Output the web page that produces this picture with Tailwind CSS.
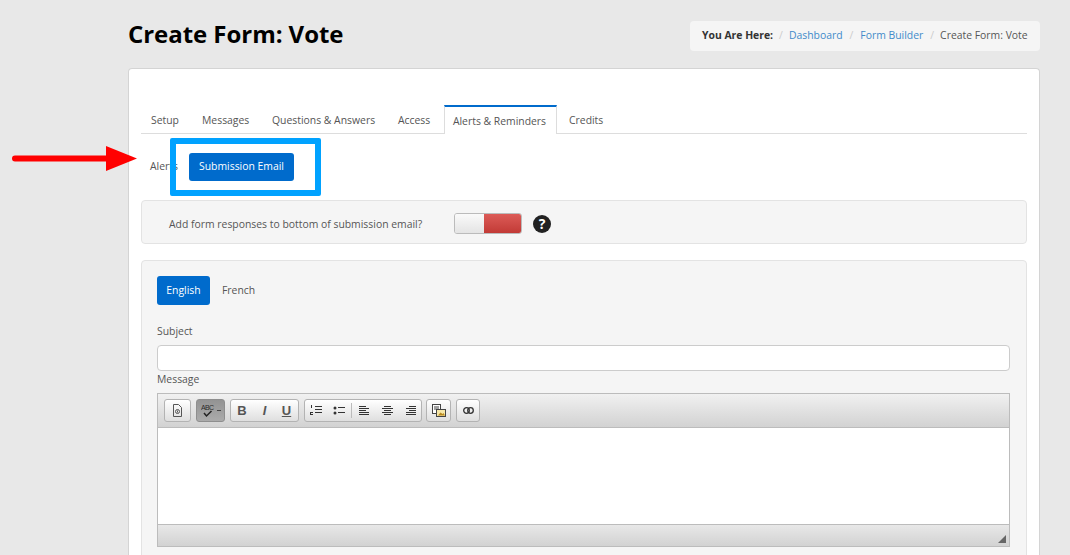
<!DOCTYPE html>
<html lang="en">
<head>
<meta charset="UTF-8">
<title>Create Form: Vote</title>
<script src="https://cdn.jsdelivr.net/npm/@tailwindcss/browser@4"></script>
</head>
<body class="relative h-[555px] overflow-hidden bg-[#e8e8e8] font-['Open_Sans',sans-serif] text-[10.4px] text-[#555]">

<!-- page header -->
<header class="ml-[128px] w-[912px] h-[68px] flex items-start justify-between">
  <h1 class="mt-[17px] text-[24px] leading-[34px] font-bold text-black tracking-[-0.05px]">Create Form: Vote</h1>
  <nav class="mt-[21px] h-[30px] w-[350px] pl-[12px] flex items-center whitespace-nowrap bg-[#f5f5f5] rounded-[4px]">
    <b class="text-[#333]">You Are Here:</b>
    <span class="mx-[6px] text-[#ccc]">/</span>
    <a class="text-[#428bca]">Dashboard</a>
    <span class="mx-[7px] text-[#ccc]">/</span>
    <a class="text-[#428bca]">Form Builder</a>
    <span class="ml-[7px] mr-[6px] text-[#ccc]">/</span>
    <span>Create Form: Vote</span>
  </nav>
</header>

<!-- main card -->
<main class="ml-[128px] w-[912px] h-[487px] overflow-hidden bg-white border border-b-0 border-[#d4d4d4] rounded-t-[4px] pt-[36px] px-[12px]">
  <div class="flex h-[29px] border-b border-[#ddd] whitespace-nowrap">
    <a class="w-[51px] pl-[10px] leading-[31px]">Setup</a>
    <a class="w-[70px] pl-[10px] leading-[31px]">Messages</a>
    <a class="w-[126px] pl-[10px] leading-[31px]">Questions &amp; Answers</a>
    <a class="w-[56px] pl-[10px] leading-[31px]">Access</a>
    <a class="w-[113px] h-[29px] pr-[2px] text-center leading-[29px] bg-white border-x border-[#ddd] border-t-2 border-t-[#006bcc]">Alerts &amp; Reminders</a>
    <a class="pl-[12px] leading-[31px]">Credits</a>
  </div>

  <div class="flex items-center h-[28px] mt-[19px] pl-[9px]">
    <a class="w-[39px]">Alerts</a>
    <a class="h-[28px] w-[105px] flex items-center justify-center rounded-[3px] bg-[#006bcc] text-white">Submission Email</a>
  </div>

  <div class="mt-[19px] h-[44px] pt-[2px] flex items-center bg-[#f5f5f5] border border-[#e3e3e3] rounded-[4px] pl-[27px]">
    <span class="w-[285px] pt-[3px]">Add form responses to bottom of submission email?</span>
    <div class="flex w-[68px] h-[21px] rounded-[3px] overflow-hidden border border-[#bbb]">
      <div class="w-[29px] bg-gradient-to-b from-[#fafafa] to-[#e4e4e4]"></div>
      <div class="flex-1 bg-gradient-to-b from-[#dc5b57] to-[#c23a36]"></div>
    </div>
    <span class="ml-[11px] w-[18px] h-[18px] mt-[1px] rounded-full bg-[#222] text-white text-[14px] font-bold leading-[18px] text-center">?</span>
  </div>

  <section class="mt-[16px] h-[320px] bg-[#f5f5f5] border border-[#e3e3e3] rounded-[4px] pl-[15px] pr-[16px] pt-[15px]">
    <div class="flex items-center h-[29px]">
      <a class="w-[53px] h-[29px] flex items-center justify-center rounded-[3px] bg-[#006bcc] text-white">English</a>
      <a class="ml-[12px]">French</a>
    </div>
    <label class="block mt-[16px] leading-[20px]">Subject</label>
    <div class="mt-[4px] h-[26px] bg-white border border-[#ccc] rounded-[4px]"></div>
    <label class="block -mt-[2px] leading-[20px]">Message</label>

    <!-- editor -->
    <div class="mt-[4px] h-[154px] border border-[#bcbcbc] bg-white flex flex-col">
      <div class="h-[34px] shrink-0 flex items-center gap-[5px] pl-[6px] border-b border-[#bcbcbc] bg-gradient-to-b from-[#f1f1f1] to-[#d2d2d2] text-[#444]">
        <span class="w-[27px] h-[23px] flex items-center justify-center rounded-[3px] border border-[#b3b3b3] bg-gradient-to-b from-white to-[#dfdfdf]">
          <svg width="11" height="13" viewBox="0 0 11 13" fill="none" stroke="#555"><path d="M1.500.5h5l3 3v9h-8z"/><circle cx="5.500" cy="7.500" r="2"/><path d="M5.500 6.500v2" /></svg>
        </span>
        <span class="w-[29px] h-[23px] flex items-center justify-center gap-[2px] rounded-[3px] border border-[#8e8e8e] bg-gradient-to-b from-[#939393] to-[#ababab]">
          <svg width="14" height="15" viewBox="0 0 14 15" fill="none"><text x="0" y="7" font-size="7" font-family="Liberation Sans" fill="#2a2a2a" textLength="13">ABC</text><path d="M3 10l2.500 3 5-5" stroke="#222" stroke-width="1.500"/></svg>
          <svg width="4" height="2"><path d="M0 0h4v1H0z" fill="#444"/></svg>
        </span>
        <span class="w-[69px] h-[23px] flex items-center rounded-[3px] border border-[#b3b3b3] bg-gradient-to-b from-white to-[#dfdfdf] font-['Liberation_Sans',sans-serif] text-[13px] leading-none text-[#555]">
          <b class="w-[22px] text-center">B</b><i class="w-[23px] text-center font-bold">I</i><b class="w-[21px] text-center underline">U</b>
        </span>
        <span class="w-[118px] h-[23px] flex items-center pl-[5px] rounded-[3px] border border-[#b3b3b3] bg-gradient-to-b from-white to-[#dfdfdf]">
          <svg width="12" height="11" viewBox="0 0 12 11" fill="#333" class="mr-[11px]"><path d="M1 0h1v3H1zM0 7h3v1H1v1h2v1H0zM5 1h7v1H5zM5 4h7v1H5zM5 7h7v1H5z"/></svg>
          <svg width="12" height="9" viewBox="0 0 12 9" fill="#333" class="mr-[6px]"><circle cx="2" cy="2" r="1.500"/><circle cx="2" cy="7" r="1.500"/><path d="M5 1h7v1H5zM5 6h7v1H5z"/></svg>
          <span class="w-px h-[15px] bg-[#bbb] mr-[7px]"></span>
          <svg width="11" height="9" viewBox="0 0 11 9" fill="#333" class="mr-[12px]"><path d="M0 0h7v1H0zM0 2h10v1H0zM0 4h7v1H0zM0 6h10v1H0zM0 8h10v1H0z"/></svg>
          <svg width="11" height="9" viewBox="0 0 11 9" fill="#333" class="mr-[12px]"><path d="M2 0h7v1H2zM0 2h11v1H0zM2 4h7v1H2zM0 6h11v1H0zM2 8h7v1H2z"/></svg>
          <svg width="11" height="9" viewBox="0 0 11 9" fill="#333"><path d="M4 0h7v1H4zM1 2h10v1H1zM4 4h7v1H4zM1 6h10v1H1zM1 8h10v1H1z"/></svg>
        </span>
        <span class="-ml-px w-[25px] h-[23px] flex items-center justify-center rounded-[3px] border border-[#b3b3b3] bg-gradient-to-b from-white to-[#dfdfdf]">
          <svg width="14" height="13" viewBox="0 0 14 13"><rect x=".5" y=".5" width="8" height="9" fill="#fff" stroke="#444"/><path d="M2 3h5M2 5h5" stroke="#444"/><rect x="4.500" y="5.500" width="9" height="7" fill="#f6e7a8" stroke="#444"/><path d="M6 11.500l2.500-3 2 1.500 1-1 1.500 2.500z" fill="#b98a1e"/></svg>
        </span>
        <span class="w-[24px] h-[23px] flex items-center justify-center rounded-[3px] border border-[#b3b3b3] bg-gradient-to-b from-white to-[#dfdfdf]">
          <svg width="11" height="7" viewBox="0 0 11 7" fill="none" stroke="#333" stroke-width="1.300"><rect x=".7" y=".7" width="5.600" height="5.600" rx="2.800"/><rect x="4.700" y=".7" width="5.600" height="5.600" rx="2.800"/></svg>
        </span>
      </div>
      <div class="flex-1"></div>
      <div class="relative h-[22px] shrink-0 border-t border-[#bcbcbc] bg-gradient-to-b from-[#e8e8e8] to-[#d2d2d2]">
        <svg class="absolute right-[3px] bottom-[3px]" width="8" height="8" viewBox="0 0 8 8"><path d="M8 0v8H0z" fill="#666"/></svg>
      </div>
    </div>
  </section>
</main>

<!-- annotations on top of the screenshot -->
<svg class="absolute left-[12px] top-[146px]" width="126" height="26" viewBox="0 0 126 26">
  <path d="M3 12.500h92" stroke="#f00" stroke-width="6" stroke-linecap="round"/>
  <path d="M94 0l31 12.500L94 25z" fill="#f00"/>
</svg>
<div class="absolute left-[170px] top-[138px] w-[151px] h-[58px] border-[6px] border-[#00a2ff] rounded-[2px]"></div>

</body>
</html>
